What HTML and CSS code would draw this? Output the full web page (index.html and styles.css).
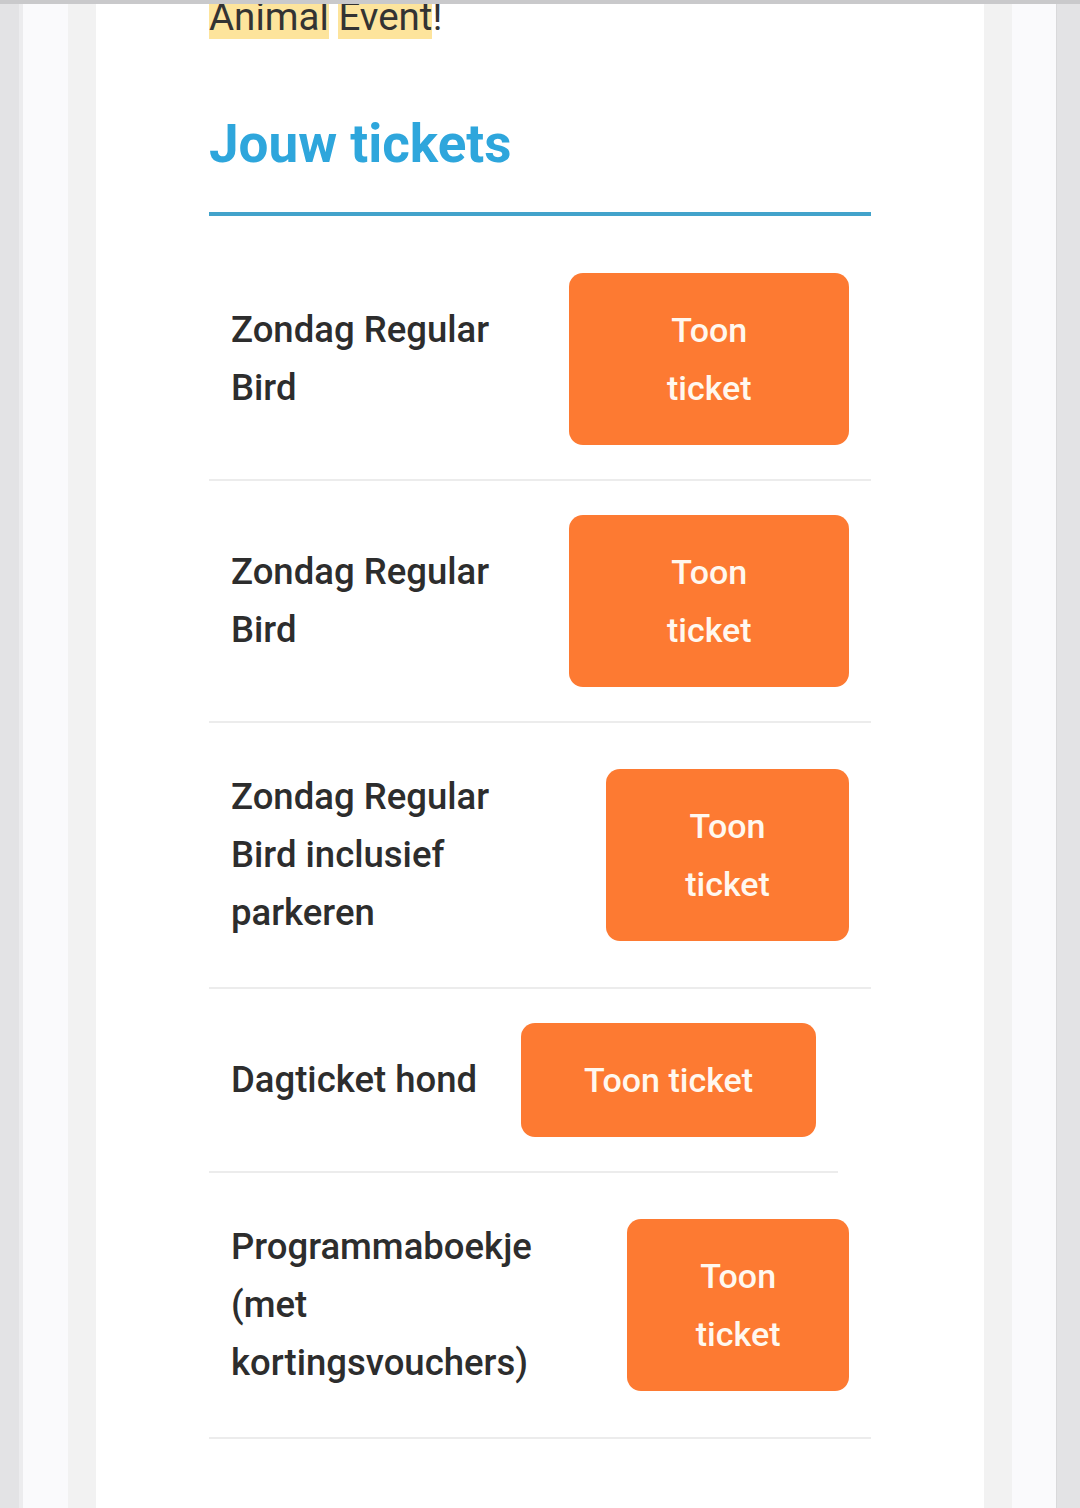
FILE: index.html
```html
<!DOCTYPE html>
<html lang="nl">
<head>
    <meta charset="UTF-8">
    <meta name="viewport" content="width=device-width, initial-scale=1.0">
    <title>Jouw tickets</title>
    <link rel="stylesheet" href="styles.css">
</head>
<body>
    <div class="topbar"></div>
    <div class="shell">
        <div class="gutter">
            <div class="mail">
                <p class="intro"><span class="hl">Animal</span> <span class="hl">Event</span>!</p>

                <h2 class="tickets-title">Jouw tickets</h2>

                <div class="ticket-list">
                    <table class="ticket">
                        <tr>
                            <td class="ticket-name">Zondag Regular Bird</td>
                            <td class="ticket-action"><a class="btn" href="#">Toon ticket</a></td>
                        </tr>
                    </table>
                    <table class="ticket">
                        <tr>
                            <td class="ticket-name">Zondag Regular Bird</td>
                            <td class="ticket-action"><a class="btn" href="#">Toon ticket</a></td>
                        </tr>
                    </table>
                    <table class="ticket">
                        <tr>
                            <td class="ticket-name">Zondag Regular Bird inclusief parkeren</td>
                            <td class="ticket-action"><a class="btn" href="#">Toon ticket</a></td>
                        </tr>
                    </table>
                    <table class="ticket">
                        <tr>
                            <td class="ticket-name">Dagticket hond</td>
                            <td class="ticket-action"><a class="btn" href="#">Toon ticket</a></td>
                        </tr>
                    </table>
                    <table class="ticket">
                        <tr>
                            <td class="ticket-name">Programmaboekje (met kortingsvouchers)</td>
                            <td class="ticket-action"><a class="btn" href="#">Toon ticket</a></td>
                        </tr>
                    </table>
                </div>
            </div>
        </div>
    </div>
</body>
</html>
```

FILE: styles.css
```css
html, body {
    margin: 0;
    padding: 0;
}

body {
    background: #e3e3e5;
    font-family: Roboto, 'Liberation Sans', sans-serif;
    color: #2d2d2d;
    min-height: 100vh;
    overflow: hidden;
}

/* browser chrome edge over the scrolled mail */
.topbar {
    position: fixed;
    top: 0;
    left: 0;
    right: 0;
    height: 4px;
    background: #c9c9cb;
    z-index: 2;
}

.shell {
    margin: 0 23px 0 19px;
    border-left: 4px solid #ececee;
    border-right: 1px solid #d9d9db;
    background: #fafafc;
    padding: 0 44px 0 45px;
    min-height: 100vh;
}

.gutter {
    background: #f2f2f2;
    padding: 0 28px;
    min-height: 100vh;
}

.mail {
    background: #fff;
    padding: 0 113px;
    min-height: 100vh;
    overflow: hidden;
}

.intro {
    margin: -10px 0 0 0;
    font-size: 38.5px;
    line-height: 54px;
    color: #333;
}

.hl {
    background: #fde49c;
}

.tickets-title {
    margin: 69px 0 0 0;
    padding-bottom: 37px;
    border-bottom: 4px solid #42a3cb;
    font-size: 53px;
    line-height: normal;
    font-weight: 700;
    color: #2ea6dc;
}

.ticket-list {
    padding-top: 23px;
}

.ticket {
    border-collapse: collapse;
    border-bottom: 2px solid #ececec;
}

.ticket-name {
    padding: 45px 22px;
    font-size: 36.5px;
    line-height: 58px;
    font-weight: 500;
    vertical-align: middle;
}

.ticket-action {
    padding: 34px 22px;
    text-align: center;
    vertical-align: middle;
}

.btn {
    display: inline-block;
    padding: 28px 63px;
    background: #fd7a32;
    color: #fff8ef;
    border-radius: 14px;
    font-size: 34px;
    line-height: 58px;
    font-weight: 500;
    text-decoration: none;
}
```
